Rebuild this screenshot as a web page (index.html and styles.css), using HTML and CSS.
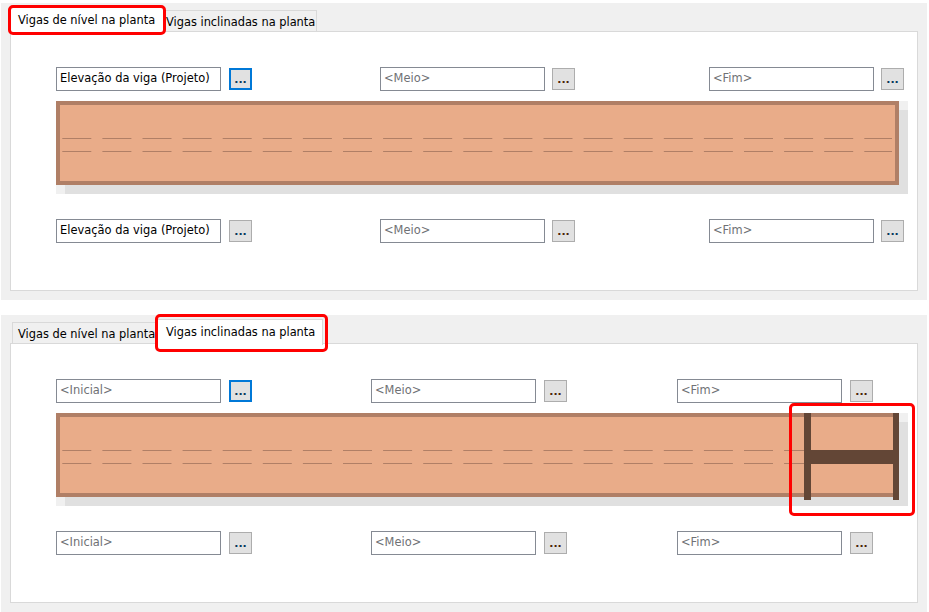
FILE: index.html
```html
<!DOCTYPE html>
<html lang="pt">
<head>
<meta charset="utf-8">
<title>Vigas</title>
<link rel="stylesheet" href="styles.css">
</head>
<body>
<section class="panel panel-first">
  <div class="tabs">
    <div class="tab tab-active tab-level-on">Vigas de nível na planta</div>
    <div class="tab tab-incl-off">Vigas inclinadas na planta</div>
  </div>
  <div class="content">
    <div class="row">
      <div class="group"><div class="field field-value">Elevação da viga (Projeto)</div><div class="btn btn-focus">...</div></div>
      <div class="group group-mid-a"><div class="field">&lt;Meio&gt;</div><div class="btn btn-tight btn-warm">...</div></div>
      <div class="group group-end-a"><div class="field">&lt;Fim&gt;</div><div class="btn btn-tight">...</div></div>
    </div>
    <svg class="beam" width="852" height="93" viewBox="0 0 852 93">
      <rect class="b-back" width="852" height="93"/>
      <rect class="b-shadow" x="9" y="9" width="843" height="84"/>
      <rect class="b-body" x="2" y="2" width="839" height="80"/>
      <line class="b-dash" x1="6.3" y1="37.5" x2="836" y2="37.5"/>
      <line class="b-dash" x1="6.3" y1="50.5" x2="836" y2="50.5"/>
    </svg>
    <div class="row row-lower">
      <div class="group"><div class="field field-value">Elevação da viga (Projeto)</div><div class="btn">...</div></div>
      <div class="group group-mid-a"><div class="field">&lt;Meio&gt;</div><div class="btn btn-tight btn-warm">...</div></div>
      <div class="group group-end-a"><div class="field">&lt;Fim&gt;</div><div class="btn btn-tight">...</div></div>
    </div>
  </div>
  <div class="mark mark-tab-a"></div>
</section>
<section class="panel panel-second">
  <div class="tabs tabs-second">
    <div class="tab tab-level-off">Vigas de nível na planta</div>
    <div class="tab tab-active tab-incl-on">Vigas inclinadas na planta</div>
  </div>
  <div class="content">
    <div class="row">
      <div class="group"><div class="field">&lt;Inicial&gt;</div><div class="btn btn-focus">...</div></div>
      <div class="group group-mid-b"><div class="field">&lt;Meio&gt;</div><div class="btn btn-warm">...</div></div>
      <div class="group group-end-b"><div class="field">&lt;Fim&gt;</div><div class="btn btn-warm">...</div></div>
    </div>
    <svg class="beam" width="852" height="93" viewBox="0 0 852 93">
      <rect class="b-back" width="852" height="93"/>
      <rect class="b-shadow" x="9" y="9" width="843" height="84"/>
      <rect class="b-body" x="2" y="2" width="839" height="80"/>
      <line class="b-dash" x1="6.3" y1="37.5" x2="748" y2="37.5"/>
      <line class="b-dash" x1="6.3" y1="50.5" x2="748" y2="50.5"/>
      <rect class="b-steel" x="748" y="0" width="7" height="87"/>
      <rect class="b-steel" x="837" y="0" width="6" height="87"/>
      <rect class="b-steel" x="755" y="37" width="82" height="14"/>
    </svg>
    <div class="row row-lower">
      <div class="group"><div class="field">&lt;Inicial&gt;</div><div class="btn">...</div></div>
      <div class="group group-mid-b"><div class="field">&lt;Meio&gt;</div><div class="btn btn-warm">...</div></div>
      <div class="group group-end-b"><div class="field">&lt;Fim&gt;</div><div class="btn btn-warm">...</div></div>
    </div>
  </div>
  <div class="mark mark-tab-b"></div>
  <div class="mark mark-steel"></div>
</section>
</body>
</html>
```
FILE: styles.css
```css
html, body {
  margin: 0;
  padding: 0;
  background: #fff;
  overflow: hidden;
}
body {
  padding: 3px 2px 0 1px;
  font-family: "DejaVu Sans", sans-serif;
  font-size: 12px;
  color: #000;
}
.panel {
  position: relative;
  box-sizing: border-box;
  width: 926px;
  height: 297px;
  padding: 0 9px;
  background: #f0f0f0;
}
.panel-second {
  margin-top: 15px;
}
.tabs {
  display: flex;
  align-items: flex-end;
  height: 28px;
  position: relative;
  z-index: 1;
}
.tabs-second {
  padding-left: 2px;
}
.tab {
  box-sizing: border-box;
  height: 21px;
  line-height: 23px;
  border: 1px solid #d9d9d9;
  border-bottom: 0;
  background: #f0f0f0;
  white-space: nowrap;
  font-size: 11.4px;
}
.tab-active {
  height: 26px;
  margin-bottom: -2px;
  background: #fff;
  line-height: 25px;
}
.tab-level-on { width: 154px; padding-left: 7px; }
.tab-incl-off { width: 153px; padding-left: 1px; }
.tab-level-off { width: 144px; padding-left: 5px; }
.tab-incl-on { width: 166px; padding-left: 8px; margin-left: 1px; }
.content {
  box-sizing: border-box;
  width: 908px;
  height: 260px;
  padding: 35px 45px 0;
  border: 1px solid #d9d9d9;
  background: #fff;
}
.row {
  display: flex;
  height: 24px;
}
.row-lower {
  margin-top: 25px;
}
.group {
  display: flex;
  flex: none;
}
.group-mid-a { margin-left: 128px; }
.group-end-a { margin-left: 134px; }
.group-mid-b { margin-left: 119px; }
.group-end-b { margin-left: 110px; }
.field {
  box-sizing: border-box;
  width: 165px;
  height: 24px;
  padding-left: 3px;
  line-height: 20px;
  border: 1px solid #858a93;
  background: #fff;
  color: #6f7175;
  font-size: 11.45px;
  white-space: nowrap;
  overflow: hidden;
}
.field-value {
  color: #000;
}
.btn {
  box-sizing: border-box;
  width: 23px;
  height: 22px;
  margin: 1px 0 0 8px;
  border: 1px solid #adadad;
  background: #e1e1e1;
  color: #06365c;
  font-size: 11px;
  font-weight: bold;
  line-height: 21px;
  text-align: center;
}
.btn-tight {
  margin-left: 7px;
}
.btn-warm {
  color: #4a2208;
}
.btn-focus {
  border: 2px solid #0078d7;
  line-height: 19px;
}
.beam {
  display: block;
  margin-top: 10px;
}
.b-back { fill: #f0f0f0; }
.b-shadow { fill: #e0e0e0; }
.b-body { fill: #e9ac89; stroke: #b07f66; stroke-width: 4; }
.b-dash { stroke: #b07f66; stroke-width: 1; stroke-dasharray: 29 11.1; }
.b-steel { fill: #634636; }
.mark {
  position: absolute;
  box-sizing: border-box;
  border: 3px solid #f00;
  border-radius: 5px;
  z-index: 2;
}
.mark-tab-a { left: 7px; top: 2px; width: 158px; height: 30px; }
.mark-tab-b { left: 154px; top: -1px; width: 173px; height: 38px; }
.mark-steel { left: 788px; top: 88px; width: 126px; height: 113px; }
```
